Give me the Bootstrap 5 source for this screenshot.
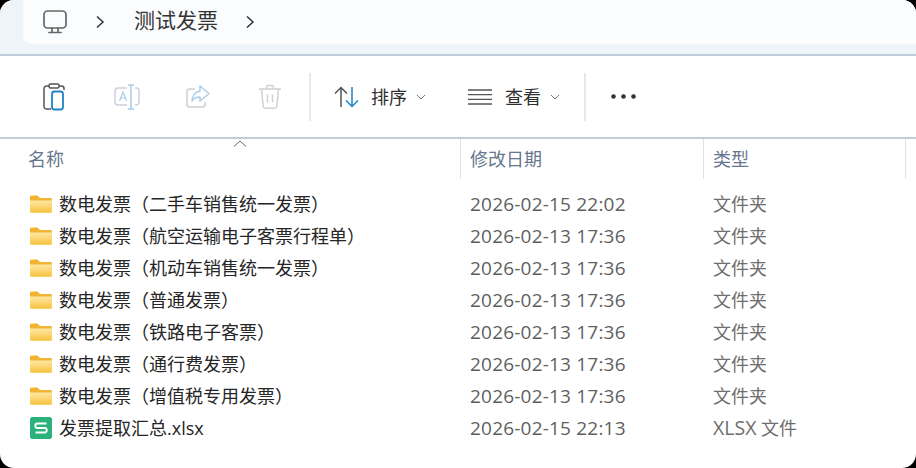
<!DOCTYPE html>
<html lang="zh-CN">
<head>
<meta charset="utf-8">
<title>测试发票</title>
<link href="https://cdn.jsdelivr.net/npm/bootstrap@5.3.0/dist/css/bootstrap.min.css" rel="stylesheet">
<style>
html,body{height:100%;margin:0;background:#000;overflow:hidden}
body{font-family:"Open Sans","Noto Sans CJK SC",sans-serif;font-size:18px;color:#2b2b2b}
.win{width:916px;height:468px;background:#fff;border-radius:14px;overflow:hidden}
.addr{height:56px;background:#eff4f9;border-bottom:2px solid #bfccdc;padding-left:23px;padding-bottom:10px}
.addr-in{height:44px;background:#fafcfe;border-bottom-left-radius:8px;padding-left:20px}
.crumb{font-size:21px;line-height:1;color:#333;margin-left:29px;padding-bottom:3px}
.arr1{margin-left:28px}
.arr2{margin-left:27px}
.tools{height:83px;border-bottom:2px solid #c3cdd9;padding-left:42px}
.tbtn{width:72px}
.tb2{margin-left:0}
.tb3{margin-left:-1px}
.tb4{margin-left:1px}
.tsep{width:2px;height:48px;background:#e8e8e8}
.ts1{margin-left:-21px}
.ts2{margin-left:24px}
.sorti{margin-left:23px}
.lbl1{margin-left:11px}
.chev{margin-left:9px}
.viewi{margin-left:42px}
.lbl2{margin-left:13px}
.moredots{margin-left:25px}
.tlabel{font-size:18px;line-height:1;color:#2f2f2f}
.hdr{height:40px;padding-left:18px;color:#66778d;position:relative}
.hcell{height:40px;padding-left:10px;line-height:40px}
.c1{width:442px}.c2{width:243px}.c3{width:203px}
.hcell.c2,.hcell.c3{border-left:1px solid #dfe3e8;padding-left:9px}
.hcell.c3{border-right:1px solid #dfe3e8}
.caret{position:absolute;left:233px;top:1px}
.rows{padding-top:9px;padding-left:18px}
.frow{height:32px;line-height:32px}
.frow .c1{padding-left:12px;color:#262626}
.frow .c2{padding-left:10px;color:#5f5f5f}
.frow .c3{padding-left:10px;color:#6e6e6e}
.ficon{width:22px;height:18px;margin-right:7px;flex:none}
.xicon{width:22px;height:22px;margin-right:7px;flex:none}
.dt{font-family:"Open Sans",sans-serif;font-size:19px;letter-spacing:.2px}
.lat{font-size:19.500px}
</style>
</head>
<body>
<div class="win">
  <div class="addr">
    <div class="addr-in d-flex align-items-center">
      <svg width="24" height="24" viewBox="0 0 24 24" fill="none" stroke="#666" stroke-width="1.700"><rect x="1" y="1" width="22" height="17" rx="3.500"/><path d="M9 18v3.500M15 18v3.500M6 22.500h12" stroke-linecap="round"/></svg>
      <svg class="arr1" width="10" height="14" viewBox="0 0 10 14" fill="none" stroke="#333" stroke-width="1.500"><path d="M2 1.500 8 7l-6 5.500"/></svg>
      <span class="crumb">测试发票</span>
      <svg class="arr2" width="10" height="14" viewBox="0 0 10 14" fill="none" stroke="#333" stroke-width="1.500"><path d="M2 1.500 8 7l-6 5.500"/></svg>
    </div>
  </div>
  <div class="tools d-flex align-items-center">
    <div class="tbtn d-flex">
      <svg width="26" height="28" viewBox="0 0 26 28" fill="none"><path d="M7 3H4.500A2.500 2.500 0 0 0 2 5.500v18A2.500 2.500 0 0 0 4.500 26H9M17 3h2.500A2.500 2.500 0 0 1 22 5.500V7" stroke="#555" stroke-width="1.500"/><rect x="7" y="1" width="10" height="4" rx="1.500" stroke="#555" stroke-width="1.500"/><rect x="10" y="8.500" width="11" height="18" rx="2.500" stroke="#1f83c8" stroke-width="1.800"/></svg>
    </div>
    <div class="tbtn tb2 d-flex">
      <svg width="26" height="26" viewBox="0 0 26 26" fill="none"><path d="M13 4H4a3 3 0 0 0-3 3v11a3 3 0 0 0 3 3h9M21 4h1.500A2.500 2.500 0 0 1 25 7v11a3 3 0 0 1-2.500 3H21" stroke="#ccd2da" stroke-width="1.500"/><path d="M5.500 17 9 8l3.500 9M6.800 14h4.400" stroke="#a9cdea" stroke-width="1.200"/><path d="M14 1h6M17 1v24M14 25h6" stroke="#a9cdea" stroke-width="1.500"/></svg>
    </div>
    <div class="tbtn tb3 d-flex">
      <svg width="26" height="26" viewBox="0 0 26 26" fill="none"><path d="M10 5H4.500A2.500 2.500 0 0 0 2 7.500v13A2.500 2.500 0 0 0 4.500 23h13a2.500 2.500 0 0 0 2.500-2.500V18" stroke="#cbcfd4" stroke-width="1.500"/><path d="M15 2l9 7.500-9 7.500v-4c-4 0-6.500 1.500-8 4 0-5 3-9 8-10z" stroke="#a9cdea" stroke-width="1.500" stroke-linejoin="round"/></svg>
    </div>
    <div class="tbtn tb4 d-flex">
      <svg width="24" height="26" viewBox="0 0 24 26" fill="none" stroke="#cfd1d4" stroke-width="1.500"><path d="M1 5h22M8.500 5V3.500A2 2 0 0 1 10.500 1.500h3a2 2 0 0 1 2 2V5M3.500 5l1.700 17.500a2 2 0 0 0 2 1.800h9.600a2 2 0 0 0 2-1.800L20.500 5M9.500 10.500v8M14.500 10.500v8"/></svg>
    </div>
    <div class="tsep ts1"></div>
    <svg class="sorti" width="26" height="22" viewBox="0 0 26 22" fill="none" stroke-width="1.500"><path d="M7 21V1.500M1 7.500l6-6 6 6" stroke="#555"/><path d="M18 1v19.500M12 14.500l6 6 6-6" stroke="#1f83c8"/></svg>
    <span class="tlabel lbl1">排序</span>
    <svg class="chev" width="10" height="6" viewBox="0 0 10 6" fill="none" stroke="#777" stroke-width="1"><path d="M1 1l4 4 4-4"/></svg>
    <svg class="viewi" width="24" height="16" viewBox="0 0 24 16" fill="none" stroke="#555" stroke-width="1.300"><path d="M0 1h24M0 5.700h24M0 10.300h24M0 15h24"/></svg>
    <span class="tlabel lbl2">查看</span>
    <svg class="chev" width="10" height="6" viewBox="0 0 10 6" fill="none" stroke="#777" stroke-width="1"><path d="M1 1l4 4 4-4"/></svg>
    <div class="tsep ts2"></div>
    <svg class="moredots" width="25" height="5" viewBox="0 0 25 5" fill="#333"><circle cx="2.500" cy="2.500" r="2.300"/><circle cx="12.500" cy="2.500" r="2.300"/><circle cx="22.500" cy="2.500" r="2.300"/></svg>
  </div>
  <div class="hdr d-flex">
    <svg class="caret" width="14" height="8" viewBox="0 0 14 8" fill="none" stroke="#666" stroke-width="1"><path d="M1 6.500 7 1l6 5.500"/></svg>
    <div class="hcell c1">名称</div>
    <div class="hcell c2">修改日期</div>
    <div class="hcell c3">类型</div>
  </div>
  <div class="rows">
    <svg width="0" height="0" class="position-absolute"><defs><linearGradient id="fg" x1="0" y1="0" x2="0" y2="1"><stop offset="0" stop-color="#ffe9a6"/><stop offset="1" stop-color="#f8c33f"/></linearGradient></defs><symbol id="folder" viewBox="0 0 22 18"><path d="M0 2a1.500 1.500 0 0 1 1.500-1.500h6L10 3h10.500A1.500 1.500 0 0 1 22 4.500V16a1.500 1.500 0 0 1-1.500 1.500h-19A1.500 1.500 0 0 1 0 16z" fill="#f3b52f"/><path d="M0 5.500h22V16a1.500 1.500 0 0 1-1.500 1.500h-19A1.500 1.500 0 0 1 0 16z" fill="url(#fg)"/></symbol></svg>
    <div class="frow d-flex"><div class="c1 d-flex align-items-center"><svg class="ficon"><use href="#folder"/></svg><span>数电发票（二手车销售统一发票）</span></div><div class="c2 dt">2026-02-15 22:02</div><div class="c3">文件夹</div></div>
    <div class="frow d-flex"><div class="c1 d-flex align-items-center"><svg class="ficon"><use href="#folder"/></svg><span>数电发票（航空运输电子客票行程单）</span></div><div class="c2 dt">2026-02-13 17:36</div><div class="c3">文件夹</div></div>
    <div class="frow d-flex"><div class="c1 d-flex align-items-center"><svg class="ficon"><use href="#folder"/></svg><span>数电发票（机动车销售统一发票）</span></div><div class="c2 dt">2026-02-13 17:36</div><div class="c3">文件夹</div></div>
    <div class="frow d-flex"><div class="c1 d-flex align-items-center"><svg class="ficon"><use href="#folder"/></svg><span>数电发票（普通发票）</span></div><div class="c2 dt">2026-02-13 17:36</div><div class="c3">文件夹</div></div>
    <div class="frow d-flex"><div class="c1 d-flex align-items-center"><svg class="ficon"><use href="#folder"/></svg><span>数电发票（铁路电子客票）</span></div><div class="c2 dt">2026-02-13 17:36</div><div class="c3">文件夹</div></div>
    <div class="frow d-flex"><div class="c1 d-flex align-items-center"><svg class="ficon"><use href="#folder"/></svg><span>数电发票（通行费发票）</span></div><div class="c2 dt">2026-02-13 17:36</div><div class="c3">文件夹</div></div>
    <div class="frow d-flex"><div class="c1 d-flex align-items-center"><svg class="ficon"><use href="#folder"/></svg><span>数电发票（增值税专用发票）</span></div><div class="c2 dt">2026-02-13 17:36</div><div class="c3">文件夹</div></div>
    <div class="frow d-flex"><div class="c1 d-flex align-items-center"><svg class="xicon" viewBox="0 0 22 22"><rect width="22" height="22" rx="2.500" fill="#2bb27c"/><path d="M16.500 6.500h-9a2.200 2.200 0 0 0 0 4.500h7a2.200 2.200 0 0 1 0 4.500h-9" fill="none" stroke="#fff" stroke-width="1.800"/></svg><span>发票提取汇总.xlsx</span></div><div class="c2 dt">2026-02-15 22:13</div><div class="c3"><span class="lat">XLSX</span> 文件</div></div>
  </div>
</div>
</body>
</html>
